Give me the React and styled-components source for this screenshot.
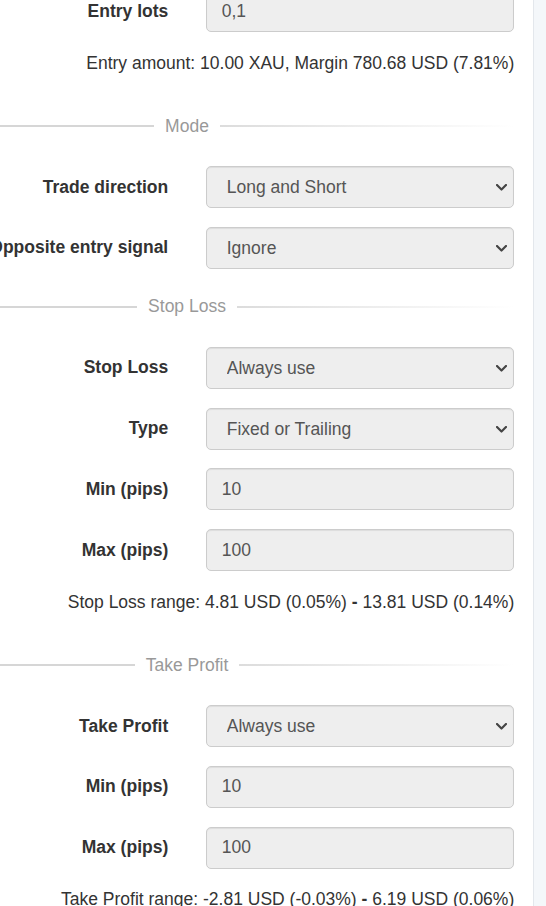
import React from "react";
import styled, { createGlobalStyle } from "styled-components";

const Global = createGlobalStyle`
  html, body { margin: 0; padding: 0; }
  body {
    background: #f4f7fa;
    font-family: "Liberation Sans", Arial, Helvetica, sans-serif;
    font-size: 17.5px;
    line-height: 25px;
    color: #333;
  }
`;

const Page = styled.div`
  display: flex;
  width: 546px;
  height: 906px;
  overflow: hidden;
`;

const Main = styled.div`
  width: 533px;
  flex: none;
  height: 906px;
  background: #fff;
  border-right: 1px solid #e3e7ec;
  overflow: hidden;
`;

const Form = styled.div`
  display: flex;
  flex-direction: column;
  width: 692px;
  margin-left: -159px;
  margin-top: -10px;
`;

const Group = styled.div`
  display: grid;
  grid-template-columns: 1fr 1fr;
  align-items: center;
  margin-bottom: 18.75px;
`;

const Label = styled.label`
  display: flex;
  justify-content: flex-end;
  padding-right: 18.75px;
  font-weight: bold;
  white-space: nowrap;
  color: #333;
`;

const Control = styled.div`
  position: relative;
  padding: 0 18.75px;
`;

const fieldBase = `
  box-sizing: border-box;
  width: 100%;
  height: 42px;
  margin: 0;
  background: #eeeeee;
  border: 1px solid #cccccc;
  border-radius: 5px;
  box-shadow: inset 0 1px 1px rgba(0, 0, 0, 0.075);
  font-family: "Liberation Sans", Arial, Helvetica, sans-serif;
  font-size: 17.5px;
  color: #555;
  outline: none;
`;

const Input = styled.input`
  ${fieldBase}
  padding: 0 15px;
`;

const Select = styled.select`
  ${fieldBase}
  appearance: none;
  -webkit-appearance: none;
  padding: 0 30px 0 20px;
`;

const Chevron = styled.svg`
  position: absolute;
  right: 26px;
  top: 50%;
  width: 11px;
  height: 7px;
  margin-top: -3px;
  pointer-events: none;
`;

const Help = styled.p`
  margin: 0 0 31px;
  padding-right: 18.75px;
  text-align: right;
  white-space: nowrap;
  color: #333;
`;

const Divider = styled.div`
  display: flex;
  align-items: center;
  gap: 11px;
  height: 25px;
  margin: 6.75px 0 27.5px;
  padding: 0 18.75px;
  color: #999;
  white-space: nowrap;
`;

const Line = styled.span`
  flex: 1;
  height: 2px;
  background: ${(p) =>
    p.$fade ? "linear-gradient(to right, #dcdcdc, rgba(220,220,220,0))" : "#d6d6d6"};
`;

const Field = ({ label, value }) => (
  <Group>
    <Label>{label}</Label>
    <Control>
      <Input defaultValue={value} readOnly />
    </Control>
  </Group>
);

const SelectField = ({ label, value }) => (
  <Group>
    <Label>{label}</Label>
    <Control>
      <Select defaultValue={value}>
        <option>{value}</option>
      </Select>
      <Chevron viewBox="0 0 11 7">
        <polyline points="1,1 5.5,5.5 10,1" fill="none" stroke="#444" strokeWidth="2.2" strokeLinecap="round" strokeLinejoin="round" />
      </Chevron>
    </Control>
  </Group>
);

const Section = ({ title }) => (
  <Divider>
    <Line />
    <span>{title}</span>
    <Line $fade />
  </Divider>
);

export default function App() {
  return (
    <Page>
      <Global />
      <Main>
        <Form>
          <Field label="Entry lots" value="0,1" />
          <Help>Entry amount: 10.00 XAU, Margin 780.68 USD (7.81%)</Help>

          <Section title="Mode" />
          <SelectField label="Trade direction" value="Long and Short" />
          <SelectField label="Opposite entry signal" value="Ignore" />

          <Section title="Stop Loss" />
          <SelectField label="Stop Loss" value="Always use" />
          <SelectField label="Type" value="Fixed or Trailing" />
          <Field label="Min (pips)" value="10" />
          <Field label="Max (pips)" value="100" />
          <Help>
            Stop Loss range: 4.81 USD (0.05%) <b>-</b> 13.81 USD (0.14%)
          </Help>

          <Section title="Take Profit" />
          <SelectField label="Take Profit" value="Always use" />
          <Field label="Min (pips)" value="10" />
          <Field label="Max (pips)" value="100" />
          <Help>
            Take Profit range: -2.81 USD (-0.03%) <b>-</b> 6.19 USD (0.06%)
          </Help>
        </Form>
      </Main>
    </Page>
  );
}
